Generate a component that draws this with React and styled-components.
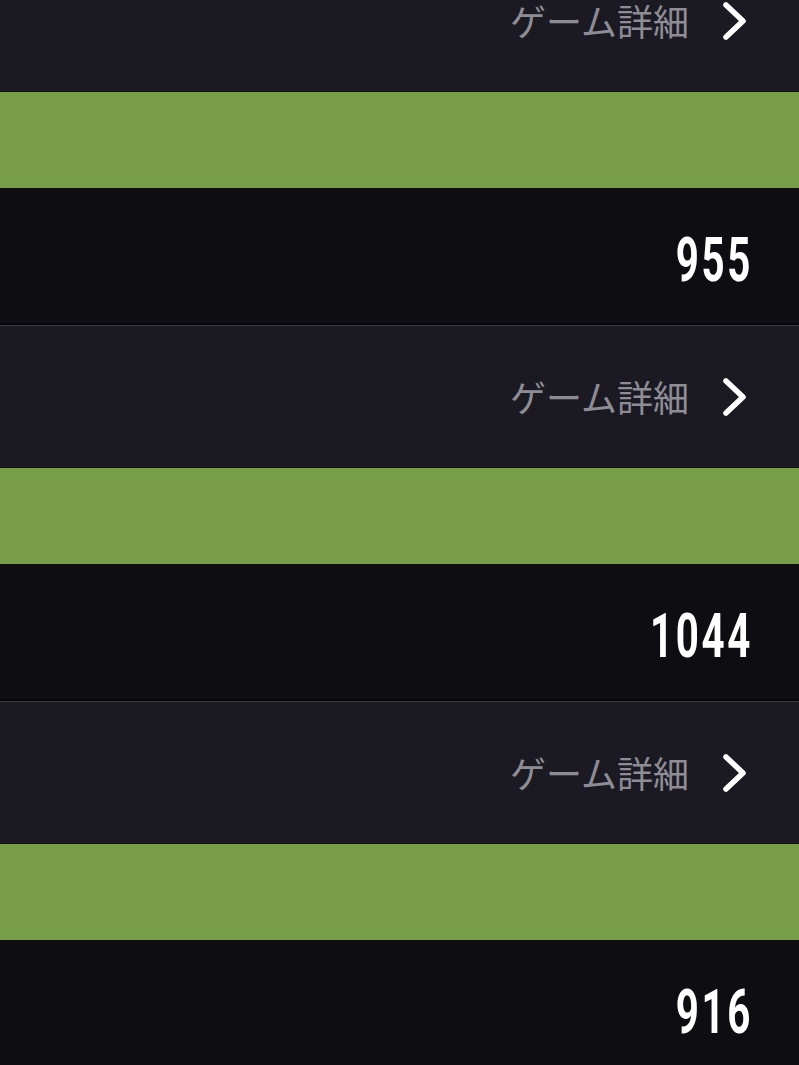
import React from 'react';
import styled, { createGlobalStyle } from 'styled-components';

const games = [
  { id: 1, score: 955 },
  { id: 2, score: 1044 },
  { id: 3, score: 916 },
];

const GlobalStyle = createGlobalStyle`
  html, body {
    margin: 0;
    padding: 0;
    background: #0d0d12;
  }
  body {
    font-family: "Noto Sans CJK JP", "Noto Sans", sans-serif;
    overflow: hidden;
  }
`;

// list is scrolled a little, so the first card's header is partly hidden
const GameList = styled.div`
  display: flex;
  flex-direction: column;
  margin-top: -51px;
`;

const GameCard = styled.section`
  display: flex;
  flex-direction: column;
`;

const CardHeader = styled.div`
  display: flex;
  justify-content: flex-end;
  align-items: center;
  height: 141px;
  padding-right: 50px;
  background: #1b1a23;
  border-top: 1px solid #393842;
  border-bottom: 1px solid #0e0d13;
`;

const DetailLink = styled.a`
  display: flex;
  align-items: center;
  gap: 30px;
  color: #8e8d96;
  font-size: 36px;
  line-height: 1.2;
  text-decoration: none;

  svg {
    display: block;
  }
`;

const ColorBar = styled.div`
  height: 96px;
  background: ${(p) => p.color};
`;

const ScoreRow = styled.div`
  display: flex;
  justify-content: flex-end;
  align-items: center;
  height: 137px;
  padding-right: 50px;
  padding-top: 10px;
  box-sizing: border-box;
  background: #0d0d12;
  border-bottom: 2px solid #07060b;
`;

const Score = styled.span`
  display: inline-block;
  color: #ffffff;
  font-family: Roboto, "Liberation Sans", sans-serif;
  font-weight: 700;
  font-size: 61px;
  line-height: 1;
  letter-spacing: 4px;
  margin-right: -4px;
  transform: scaleX(0.66);
  transform-origin: right center;
`;

const Chevron = () => (
  <svg width="30" height="42" viewBox="0 0 30 42" fill="none">
    <path
      d="M7 5 L24 21 L7 37"
      stroke="#ffffff"
      strokeWidth="5.5"
      strokeLinecap="round"
      strokeLinejoin="round"
    />
  </svg>
);

const App = () => (
  <>
    <GlobalStyle />
    <GameList>
      {games.map((game) => (
        <GameCard key={game.id}>
          <CardHeader>
            <DetailLink href="#">
              <span>ゲーム詳細</span>
              <Chevron />
            </DetailLink>
          </CardHeader>
          <ColorBar color="#789d48" />
          <ScoreRow>
            <Score>{game.score}</Score>
          </ScoreRow>
        </GameCard>
      ))}
    </GameList>
  </>
);

export default App;
